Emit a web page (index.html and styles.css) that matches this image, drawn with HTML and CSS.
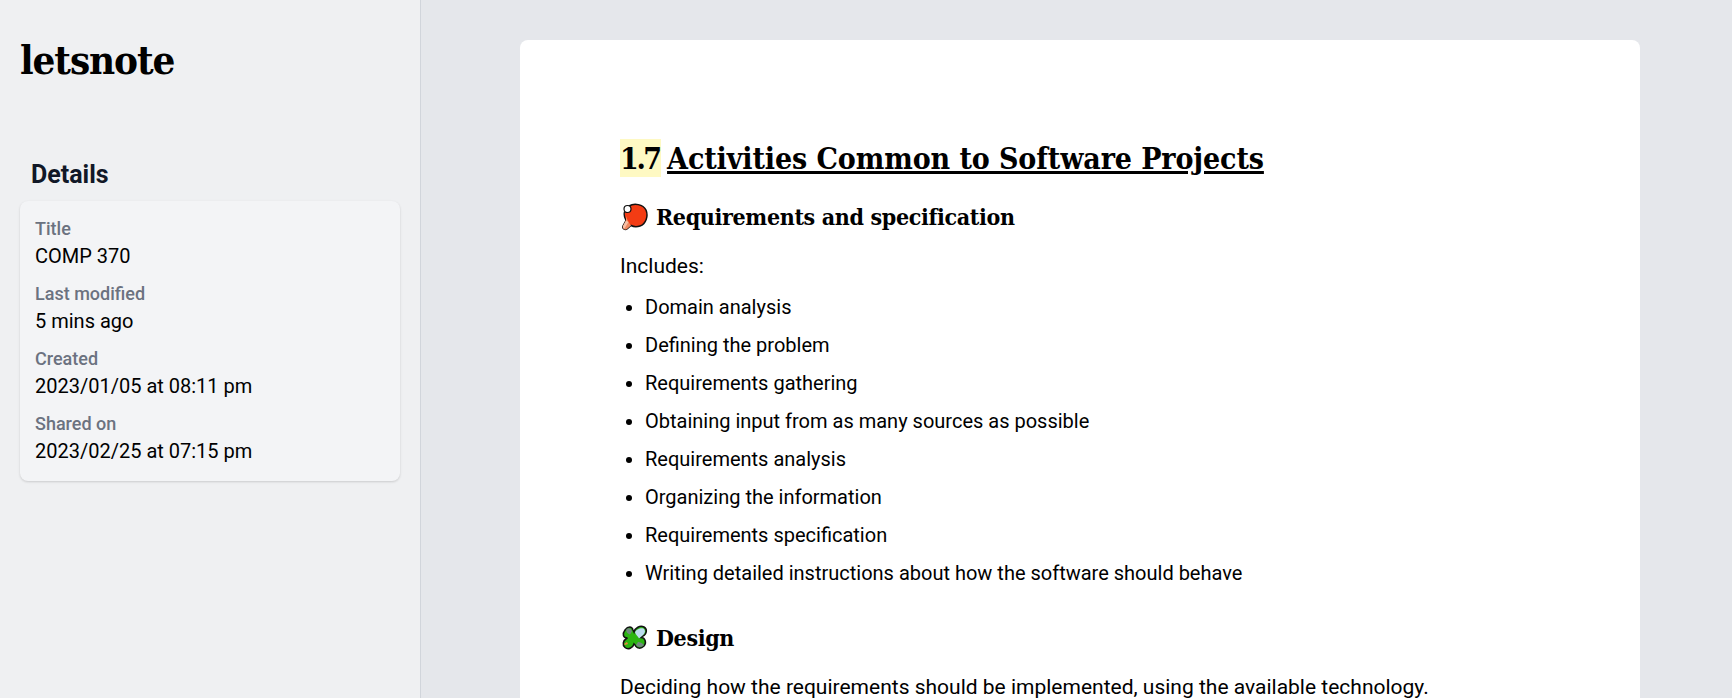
FILE: index.html
```html
<!DOCTYPE html>
<html lang="en">
<head>
<meta charset="utf-8">
<title>letsnote</title>
<link rel="stylesheet" href="styles.css">
</head>
<body>
<div class="app">
  <aside class="sidebar">
    <h1 class="brand">letsnote</h1>
    <h2 class="details-title">Details</h2>
    <dl class="details-card">
      <div class="detail"><dt>Title</dt><dd>COMP 370</dd></div>
      <div class="detail"><dt>Last modified</dt><dd>5 mins ago</dd></div>
      <div class="detail"><dt>Created</dt><dd>2023/01/05 at 08:11 pm</dd></div>
      <div class="detail"><dt>Shared on</dt><dd>2023/02/25 at 07:15 pm</dd></div>
    </dl>
  </aside>
  <main class="content">
    <article class="page">
      <h1 class="doc-title"><mark>1.7</mark> <u>Activities Common to Software Projects</u></h1>
      <h2 class="doc-heading">
        <svg class="emoji" viewBox="0 0 28 28" aria-hidden="true"><path d="M9 3C14 0 23 1 26 7c2.500 6 0 14-6 16-3 1-6.500.8-9-.5l-4 3.500c-2 1.500-5-.5-4-3l3-5.500C3.500 13 3 7 9 3z" fill="#f33c14" stroke="#111" stroke-width="1.500"/><path d="M6 13c1 4 3 7 5 9.500L7 26c-2 1.500-5-.5-4-3l3-5.500z" fill="#ef8a62"/><path d="M3 23l3-5.500 2.500 1.500-4 6.500c-1 0-2-1.500-1.500-2.500z" fill="#f6c0a6"/><circle cx="7.500" cy="6" r="3.500" fill="#fff" stroke="#111" stroke-width="1.200"/></svg>
        Requirements and specification</h2>
      <p>Includes:</p>
      <ul>
        <li>Domain analysis</li>
        <li>Defining the problem</li>
        <li>Requirements gathering</li>
        <li>Obtaining input from as many sources as possible</li>
        <li>Requirements analysis</li>
        <li>Organizing the information</li>
        <li>Requirements specification</li>
        <li>Writing detailed instructions about how the software should behave</li>
      </ul>
      <h2 class="doc-heading">
        <svg class="emoji" viewBox="0 0 28 28" aria-hidden="true"><path d="M5 6C8 2 12 2 13 6l1 2c1-4 6-7 10-5 3.500 2 3 7-1 9l-2 1.500c4 0 6 5 3 8.500-3 3-7 3-9-1l-1-1c-1 4-6 6-9 3.500-3-2.500-2-7 1.500-9l1-.5C3 14 2 10 5 6z" fill="#2bb512" stroke="#111" stroke-width="1.500"/><path d="M15 8.500c1-3 5.500-5 8.500-4 2.500 2 1.500 5-1 7-1 1-2.500 2-3.500 3-1-2.500-3-3-4-6z" fill="#bcdcef"/><path d="M6.500 5c2-1.500 5-.5 5.500 2.500L10 10.500C8 10 5.500 8 6.500 5zM18 18c2 0 4.500 1 6 3-2 2.500-6 2.500-8 0z" fill="#71897e"/><path d="M4 20l3-2 1 2-3 1z" fill="#e8873c"/></svg>
        Design</h2>
      <p>Deciding how the requirements should be implemented, using the available technology.</p>
    </article>
  </main>
</div>
</body>
</html>
```
FILE: styles.css
```css
* { box-sizing: border-box; }
html, body { margin: 0; height: 100%; overflow: hidden; }
body { font-family: Roboto, sans-serif; color: #000; background: #e5e7eb; }
.app { display: flex; height: 698px; overflow: hidden; }
.sidebar { flex: 0 0 421px; background: #eff0f2; border-right: 1px solid #d1d5db; padding: 33px 20px 0; }
.brand { margin: 0; font-family: "DejaVu Serif Condensed", "Liberation Serif", serif; font-size: 40px; font-weight: 700; line-height: 54px; letter-spacing: -1.1px; }
.details-title { margin: 72px 0 0 11px; font-size: 25px; font-weight: 700; line-height: 32px; color: #111827; }
.details-card { margin: 10px 0 0; width: 380px; height: 280px; padding: 14px 15px; background: #f3f4f6; border-radius: 8px; box-shadow: 0 1px 3px rgba(0,0,0,.1), 0 1px 2px rgba(0,0,0,.06); display: flex; flex-direction: column; gap: 10px; }
.detail dt { font-size: 18px; font-weight: 500; line-height: 27px; color: #6b7280; }
.detail dd { margin: 0; font-size: 20px; line-height: 28px; }
.content { flex: 1; padding: 40px 0 0 99px; min-width: 0; }
.page { width: 1120px; height: 658px; padding: 99px 100px 0; background: #fff; border-radius: 8px 8px 0 0; }
.doc-title { margin: 0; font-family: "DejaVu Serif Condensed", "Liberation Serif", serif; font-size: 30px; font-weight: 700; line-height: 40px; letter-spacing: -.1px; }
.doc-title mark { background: #fef9c3; color: inherit; letter-spacing: -2.400px; padding: 2px 1px 1px 0; margin-right: -3px; }
.doc-heading { margin: 19px 0 0; font-family: "DejaVu Serif Condensed", "Liberation Serif", serif; font-size: 23px; font-weight: 700; line-height: 38px; letter-spacing: -.35px; display: flex; align-items: center; gap: 8px; }
.emoji { width: 28px; height: 28px; flex: none; }
p { margin: 15px 0 0; font-size: 21px; line-height: 30px; }
ul { margin: 7px 0 0; padding: 0 0 0 25px; font-size: 20px; }
li { line-height: 38px; }
ul + .doc-heading { margin-top: 27px; }
ul + .doc-heading + p { margin-top: 15px; }
```
